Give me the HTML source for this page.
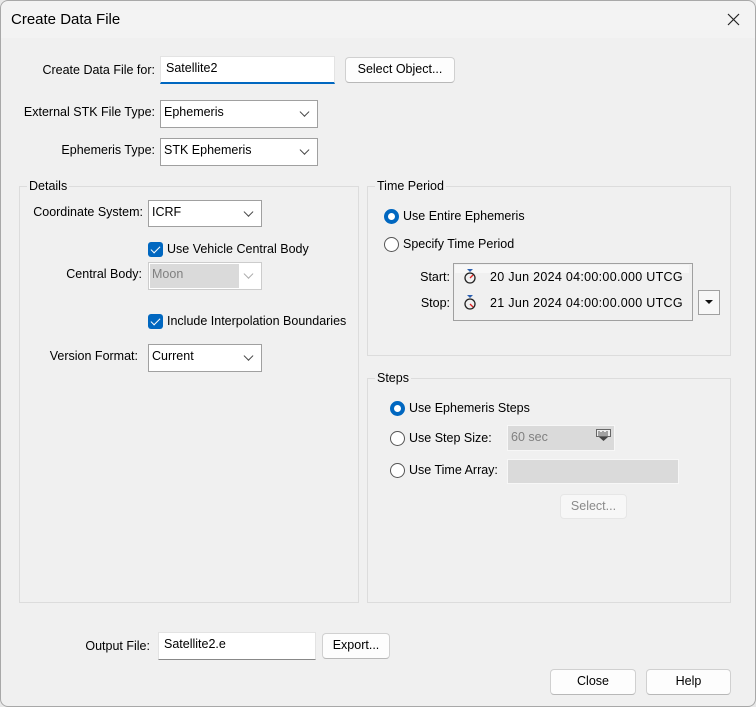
<!DOCTYPE html>
<html><head><meta charset="utf-8"><style>
*{box-sizing:border-box;margin:0;padding:0}
body{width:756px;height:707px;background:#e8e8e8;font-family:"Liberation Sans",sans-serif;font-size:12.5px;color:#000;position:relative;overflow:hidden}
.win{position:absolute;left:0;top:0;width:756px;height:707px;background:#f0f0f0;border-radius:8px;overflow:hidden}
.frame{position:absolute;left:0;top:0;width:756px;height:707px;border:1px solid #a8a8a8;border-radius:8px;pointer-events:none}
.tb{position:absolute;left:0;top:0;width:756px;height:38px;background:#f3f3f3}
.a{position:absolute}
.lbl{position:absolute;white-space:nowrap;line-height:14px}
.r{text-align:right}
.tx{position:absolute;background:#fff;border:1px solid #e3e3e3;border-bottom:2px solid #0067c0;padding:4px 5px;line-height:14px}
.cb{position:absolute;background:#fff;border:1px solid #a0a0a0;padding:4px 3px;line-height:14px}
.cb:after{content:"";position:absolute;right:9px;top:50%;width:6px;height:6px;border-right:1px solid #444;border-bottom:1px solid #444;transform:translateY(-80%) rotate(45deg)}
.cb.dis:after{border-color:#aaa}
.btn{position:absolute;background:#fdfdfd;border:1px solid #d0d0d0;border-bottom-color:#b8b8b8;border-radius:4px;text-align:center;line-height:23px}
.grp{position:absolute;border:1px solid #dcdcdc}
.gl{position:absolute;top:-8px;left:7px;background:#f0f0f0;padding:0 2px;line-height:14px}
.rad{position:absolute;width:15px;height:15px;border-radius:50%;border:1px solid #555;background:#fff}
.rad.on{border:4px solid #0067c0;background:#fff}
.chk{position:absolute;width:15px;height:15px;border-radius:3px;background:#0067c0}
.chk:after{content:"";position:absolute;left:5px;top:2px;width:4px;height:8px;border-right:1.5px solid #fff;border-bottom:1.5px solid #fff;transform:rotate(45deg)}
</style></head><body>
<div class="win">
<div class="tb"></div>
<div class="lbl" style="left:11px;top:11px;font-size:15px;line-height:17px">Create Data File</div>
<svg class="a" style="left:727px;top:13px" width="13" height="13"><path d="M1 1L12 12M12 1L1 12" stroke="#222" stroke-width="1.2"/></svg>

<div class="lbl r" style="right:601px;top:63px">Create Data File for:</div>
<div class="tx" style="left:160px;top:56px;width:175px;height:28px">Satellite2</div>
<div class="btn" style="left:345px;top:57px;width:110px;height:26px">Select Object...</div>

<div class="lbl r" style="right:601px;top:105px">External STK File Type:</div>
<div class="cb" style="left:160px;top:100px;width:158px;height:28px">Ephemeris</div>
<div class="lbl r" style="right:601px;top:143px">Ephemeris Type:</div>
<div class="cb" style="left:160px;top:138px;width:158px;height:28px">STK Ephemeris</div>

<div class="grp" style="left:19px;top:186px;width:340px;height:417px"><div class="gl">Details</div></div>
<div class="lbl r" style="right:613px;top:205px">Coordinate System:</div>
<div class="cb" style="left:148px;top:200px;width:114px;height:27px">ICRF</div>
<div class="chk" style="left:148px;top:242px"></div>
<div class="lbl" style="left:167px;top:242px">Use Vehicle Central Body</div>
<div class="lbl r" style="right:614px;top:267px">Central Body:</div>
<div class="cb dis" style="left:148px;top:262px;width:114px;height:28px;border-color:#ccc;background:#fff;padding:1px"><div style="background:#dadada;width:89px;height:24px;color:#808080;padding:3px 2px">Moon</div></div>
<div class="chk" style="left:148px;top:314px"></div>
<div class="lbl" style="left:167px;top:314px">Include Interpolation Boundaries</div>
<div class="lbl r" style="right:618px;top:349px">Version Format:</div>
<div class="cb" style="left:148px;top:344px;width:114px;height:28px">Current</div>

<div class="grp" style="left:367px;top:186px;width:364px;height:170px"><div class="gl">Time Period</div></div>
<div class="rad on" style="left:384px;top:209px"></div>
<div class="lbl" style="left:403px;top:209px">Use Entire Ephemeris</div>
<div class="rad" style="left:384px;top:237px"></div>
<div class="lbl" style="left:403px;top:237px">Specify Time Period</div>
<div class="lbl r" style="right:306px;top:270px">Start:</div>
<div class="lbl r" style="right:306px;top:296px">Stop:</div>
<div class="a" style="left:453px;top:263px;width:240px;height:58px;border:1px solid #a0a0a0;background:#f0f0f0"></div>
<div class="a" style="left:455px;top:265px;width:234px;height:8px;background:#f7f7f7"></div>
<svg class="a" style="left:463px;top:268px" width="14" height="17"><path d="M4 1h6l-3 3z" fill="#2a5fb0"/><circle cx="7" cy="10" r="5" fill="none" stroke="#222" stroke-width="1.3"/><path d="M7 10l3-3" stroke="#d22" stroke-width="1.3"/></svg>
<svg class="a" style="left:463px;top:294px" width="14" height="17"><path d="M4 1h6l-3 3z" fill="#2a5fb0"/><circle cx="7" cy="10" r="5" fill="none" stroke="#222" stroke-width="1.3"/><path d="M7 10l3 3" stroke="#d22" stroke-width="1.3"/></svg>
<div class="lbl" style="left:490px;top:270px;letter-spacing:.3px">20 Jun 2024 04:00:00.000 UTCG</div>
<div class="lbl" style="left:490px;top:296px;letter-spacing:.3px">21 Jun 2024 04:00:00.000 UTCG</div>
<div class="a" style="left:698px;top:290px;width:22px;height:25px;border:1px solid #a0a0a0;background:#f7f7f7"></div>
<svg class="a" style="left:705px;top:299px" width="8" height="6"><path d="M0 1h8l-4 4z" fill="#111"/></svg>

<div class="grp" style="left:367px;top:378px;width:364px;height:225px"><div class="gl">Steps</div></div>
<div class="rad on" style="left:390px;top:401px"></div>
<div class="lbl" style="left:409px;top:401px">Use Ephemeris Steps</div>
<div class="rad" style="left:390px;top:431px"></div>
<div class="lbl" style="left:409px;top:431px">Use Step Size:</div>
<div class="a" style="left:507px;top:425px;width:108px;height:26px;background:#dadada;border:1px solid #f7f7f7;color:#808080;padding:4px 3px;line-height:14px">60 sec</div>
<svg class="a" style="left:596px;top:429px" width="15" height="13"><rect x="0.5" y="0.5" width="14" height="7" fill="#eee" stroke="#666"/><path d="M3 2v5M5 3v4M7 2v5M9 3v4M11 2v5" stroke="#555"/><path d="M3 8h9l-4.5 4z" fill="#444"/></svg>
<div class="rad" style="left:390px;top:463px"></div>
<div class="lbl" style="left:409px;top:463px">Use Time Array:</div>
<div class="a" style="left:507px;top:459px;width:172px;height:25px;background:#dadada;border:1px solid #f7f7f7"></div>
<div class="btn" style="left:560px;top:494px;width:67px;height:25px;color:#8a8a8a;border-color:#e6e6e6;background:#f7f7f7">Select...</div>

<div class="lbl r" style="right:606px;top:639px">Output File:</div>
<div class="tx" style="left:158px;top:632px;width:158px;height:28px;border-bottom:1px solid #888">Satellite2.e</div>
<div class="btn" style="left:322px;top:633px;width:68px;height:26px">Export...</div>
<div class="btn" style="left:550px;top:669px;width:86px;height:26px">Close</div>
<div class="btn" style="left:646px;top:669px;width:85px;height:26px">Help</div>
</div>
<div class="frame"></div>
</body></html>
